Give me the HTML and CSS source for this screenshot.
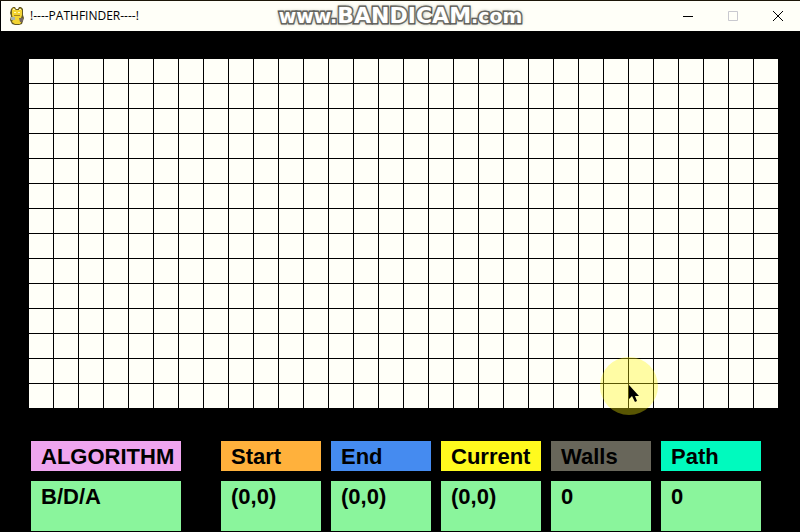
FILE: index.html
```html
<!DOCTYPE html>
<html lang="en">
<head>
<meta charset="utf-8">
<title>!----PATHFINDER----!</title>
<link rel="stylesheet" href="styles.css">
</head>
<body>
<div class="window">
  <header class="titlebar">
    <svg class="app-icon" viewBox="0 0 16 18" aria-hidden="true">
      <path d="M2 2 4 0h2l1 2h2l1-2h2l2 2v6l1 3-1 3-1 3-3 1H6l-3-1-2-4 1-4-1-3z" fill="#655a24"/>
      <path d="M3 3 4 1h1l2 2h3l1-2 2 2v5l-1 3 1 3-2 3H6l-3-2 1-3-1-4z" fill="#f3d432"/>
      <path d="M4 2h2v1H4zM10 2h2v1h-2zM5 5h2v1H5zM9 5h2v1H9z" fill="#fff8bc"/>
      <path d="M2 10h4v3H2z" fill="#a9b4ae"/>
      <path d="M10 11h4v4h-3z" fill="#75665e"/>
      <path d="M5 8h6v1H5z" fill="#a68222"/>
    </svg>
    <h1 class="title">!----PATHFINDER----!</h1>
    <div class="watermark">www.<span class="brand">BANDICAM</span>.com</div>
    <div class="controls">
      <button class="control" type="button" aria-label="Minimize"><svg viewBox="0 0 10 10"><path d="M0 5.500h10" stroke="#000"/></svg></button>
      <button class="control" type="button" aria-label="Maximize" disabled><svg viewBox="0 0 10 10"><path d="M.5.5h9v9h-9z" stroke="#c9c9cf"/></svg></button>
      <button class="control" type="button" aria-label="Close"><svg viewBox="0 0 10 10"><path d="M0 0l10 10M10 0 0 10" stroke="#000"/></svg></button>
    </div>
  </header>
  <main>
    <div class="board" id="board">
      <div class="pointer">
        <svg viewBox="0 0 12 18" aria-hidden="true"><path d="M1 0v14l3-3 3 6 2-1-2-5h4z" fill="#000"/></svg>
      </div>
    </div>
    <div class="stats">
      <dl class="stat algorithm"><dt>ALGORITHM</dt><dd>B/D/A</dd></dl>
      <dl class="stat start"><dt>Start</dt><dd>(0,0)</dd></dl>
      <dl class="stat end"><dt>End</dt><dd>(0,0)</dd></dl>
      <dl class="stat current"><dt>Current</dt><dd>(0,0)</dd></dl>
      <dl class="stat walls"><dt>Walls</dt><dd>0</dd></dl>
      <dl class="stat path"><dt>Path</dt><dd>0</dd></dl>
    </div>
  </main>
</div>
<script src="board.js"></script>
</body>
</html>
```
FILE: styles.css
```css
* { box-sizing: border-box; }
body { margin: 0; background: #000; }
.window { border-top: 1px solid #1c1608; }
.titlebar {
  position: relative;
  display: flex;
  align-items: center;
  height: 30px;
  margin-left: 1px;
  padding-left: 8px;
  background: #fffff8;
}
.app-icon { width: 16px; height: 18px; }
.title {
  margin: 0 0 0 5px;
  font: 400 12px/16px "Open Sans", "Noto Sans", sans-serif;
  color: #000;
}
.watermark {
  position: absolute;
  left: 50%;
  transform: translateX(-50%);
  font: 700 19px/30px "DejaVu Sans", sans-serif;
  color: #fff;
  white-space: nowrap;
  -webkit-text-stroke: 3px #4c4c4c;
  paint-order: stroke fill;
  text-shadow: 0 0 3px #88887c, 0 0 4px #88887c;
}
.brand { font-size: 22px; }
.controls { display: flex; margin-left: auto; }
.control {
  display: grid;
  place-items: center;
  width: 45px;
  height: 30px;
  padding: 0;
  border: 0;
  background: none;
}
.control svg { width: 10px; height: 10px; fill: none; overflow: visible; }
.board {
  position: relative;
  display: grid;
  grid-template-columns: repeat(30, 1fr);
  grid-auto-rows: 24px;
  gap: 1px;
  margin: 28px 22px 0 29px;
}
.cell { background: #fffff8; }
.pointer {
  position: absolute;
  left: 80%;
  top: 298px;
  width: 58px;
  height: 58px;
  margin-left: -28px;
  border-radius: 50%;
  background: rgba(255, 245, 10, 0.350);
}
.pointer svg { position: absolute; left: 28px; top: 28px; width: 12px; height: 18px; }
.stats {
  display: grid;
  grid-template-columns: 3fr 20px repeat(5, 2fr);
  column-gap: 10px;
  margin: 33px 39px 0 31px;
  font: 700 22px/32px "Liberation Sans", Arial, sans-serif;
  color: #000;
}
.stat { margin: 0; min-width: 0; }
.start { grid-column: 3; }
.stat dt { height: 30px; padding-left: 10px; }
.stat dd { height: 50px; margin: 10px 0 0; padding-left: 10px; background: #8af59c; }
.stat dt, .stat dd { white-space: nowrap; }
.algorithm dt { background: #efa5ef; }
.start dt { background: #ffb13c; }
.end dt { background: #458bf0; }
.current dt { background: #fffa1e; }
.walls dt { background: #68665a; }
.path dt { background: #00fabe; }
```
FILE: board.js
```js
const COLUMNS = 30;
const ROWS = 14;
const board = document.getElementById("board");
const pointer = board.querySelector(".pointer");

for (let i = 0; i < COLUMNS * ROWS; i++) {
  const cell = document.createElement("div");
  cell.className = "cell";
  board.insertBefore(cell, pointer);
}
```
